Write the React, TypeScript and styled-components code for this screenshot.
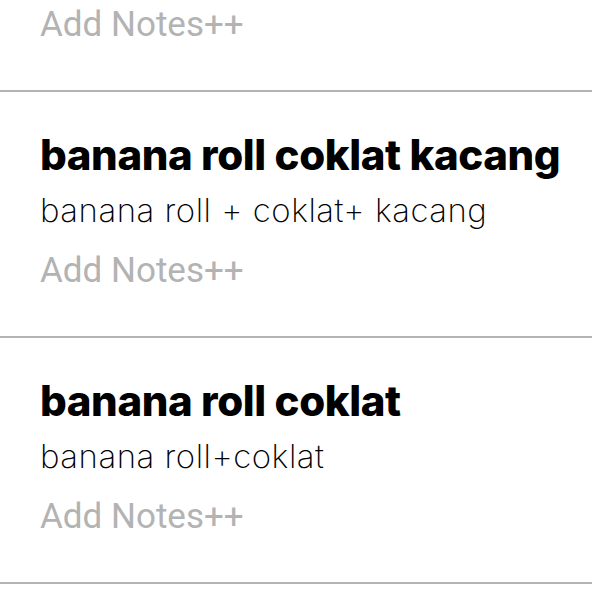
import styled, { createGlobalStyle } from "styled-components";

interface Menu {
    name: string;
    detail: string;
}

const menus: Menu[] = [
    { name: "banana roll coklat kacang", detail: "banana roll + coklat+ kacang" },
    { name: "banana roll coklat", detail: "banana roll+coklat" },
];

const GlobalStyle = createGlobalStyle`
    body {
        margin: 0;
        background: #ffffff;
        font-family: Inter, "Liberation Sans", sans-serif;
    }
`;

const App = () => {
    return (
        <>
            <GlobalStyle />
            <List>
                <Item $partial>
                    <Notes>Add Notes++</Notes>
                </Item>
                {menus.map((m) => (
                    <Item key={m.name}>
                        <Title>{m.name}</Title>
                        <Detail>{m.detail}</Detail>
                        <Notes>Add Notes++</Notes>
                    </Item>
                ))}
            </List>
        </>
    );
};
export default App;

const List = styled.div`
    display: flex;
    flex-direction: column;
    width: 100%;
    overflow: hidden;
`;

const Item = styled.div<{ $partial?: boolean }>`
    display: flex;
    flex-direction: column;
    padding: ${({ $partial }) => ($partial ? "4px 20px 44px 40px" : "39px 20px 44px 40px")};
    border-bottom: 2px solid #b4b4b4;
`;

const Title = styled.div`
    font-family: Inter, "Liberation Sans", sans-serif;
    font-weight: 800;
    font-size: 42px;
    line-height: 48px;
    color: #000000;
    letter-spacing: -0.4px;
    white-space: nowrap;
`;

const Detail = styled.div`
    font-family: Inter, "Liberation Sans", sans-serif;
    font-weight: 200;
    font-size: 33px;
    line-height: 40px;
    color: #000000;
    letter-spacing: 0.5px;
    margin-top: 11px;
`;

const Notes = styled.div`
    font-family: Roboto, "Noto Sans", sans-serif;
    font-weight: 400;
    font-size: 35px;
    line-height: 42px;
    color: #b3b3b3;
    margin-top: 20px;
    ${Item}:first-child & {
        margin-top: 0;
    }
`;
